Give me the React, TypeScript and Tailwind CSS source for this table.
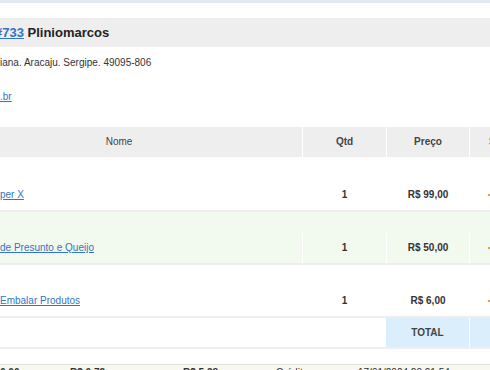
import React from 'react'

const items = [
  { name: 'per X', qty: 1, price: 'R$ 99,00', bg: 'bg-white', h: 'h-[55px]' },
  { name: 'de Presunto e Queijo', qty: 1, price: 'R$ 50,00', bg: 'bg-[#f2f9ef]', h: 'h-[53px]' },
  { name: 'Embalar Produtos', qty: 1, price: 'R$ 6,00', bg: 'bg-white', h: 'h-[53px]' },
]

function ItemRow({ name, qty, price, bg, h }: { name: string; qty: number; price: string; bg: string; h: string }) {
  return (
    <div className={`grid grid-cols-[302px_84px_83px_1fr] border-b-2 border-[#eeeeee] ${h} ${bg}`}>
      <div className="flex items-end pb-[9px] overflow-hidden">
        <a href="#" className="text-[#3474c0] underline whitespace-nowrap">{name}</a>
      </div>
      {[String(qty), price].map((v, i) => (
        <div key={i} className="flex flex-col">
          <div className="h-[21px]" />
          <div className="flex-1 border-l border-white flex items-end justify-center pb-[9px] font-bold text-[#333333] whitespace-nowrap">
            {v}
          </div>
        </div>
      ))}
      <div className="flex flex-col">
        <div className="h-[21px]" />
        <div className="flex-1 border-l border-white flex items-end pl-[18px] pb-[14px]">
          <div className="w-[6px] h-[2px] bg-[#f39c45]" />
        </div>
      </div>
    </div>
  )
}

export default function App() {
  return (
    <div className="w-[490px] h-[370px] overflow-hidden bg-white text-[10px] leading-[12px] text-[#333333] font-['Liberation_Sans',Arial,sans-serif]">
      <div className="h-[3px] bg-[#e1e8f0]" />

      <div className="mt-[15px] h-[29px] bg-[#eeeeee] flex items-center">
        <div className="-ml-[5px] text-[13px] leading-[16px] font-bold whitespace-nowrap text-[#222222]">
          <a href="#" className="text-[#3474c0] underline">#733</a> Pliniomarcos
        </div>
      </div>

      <div className="mt-[10px] whitespace-nowrap">iana. Aracaju. Sergipe. 49095-806</div>
      <div className="mt-[22px]">
        <a href="#" className="text-[#3474c0] underline">.br</a>
      </div>

      <div className="mt-[24px] grid grid-cols-[302px_84px_83px_1fr] h-[30px] bg-[#eeeeee] text-[#444444]">
        <div className="flex items-center justify-center pr-[64px]">Nome</div>
        <div className="flex items-center justify-center border-l border-white font-bold">Qtd</div>
        <div className="flex items-center justify-center border-l border-white font-bold">Preço</div>
        <div className="flex items-center border-l border-white font-bold pl-[19px] whitespace-nowrap overflow-hidden">Subtotal</div>
      </div>

      {items.map((it) => (
        <ItemRow key={it.name} {...it} />
      ))}

      <div className="grid grid-cols-[302px_84px_83px_1fr] h-[31px] border-b-2 border-[#eeeeee]">
        <div />
        <div />
        <div className="flex items-center justify-center bg-[#dbeefb] font-bold text-[#444444]">TOTAL</div>
        <div className="bg-[#dbeefb] border-l border-white" />
      </div>

      <div className="mt-[15px] border-t border-[#e2e2da] bg-[#f8f8f0] pt-[2px] flex whitespace-nowrap">
        <div className="w-[70px] font-bold">6,00</div>
        <div className="w-[113px]">
          <span className="font-bold">R$ 0,72</span> <span className="text-[8px] text-[#888888]">(12%)</span>
        </div>
        <div className="w-[93px] font-bold">R$ 5,28</div>
        <div className="w-[82px]">Crédito</div>
        <div>17/01/2024 20:21:54</div>
      </div>
    </div>
  )
}
